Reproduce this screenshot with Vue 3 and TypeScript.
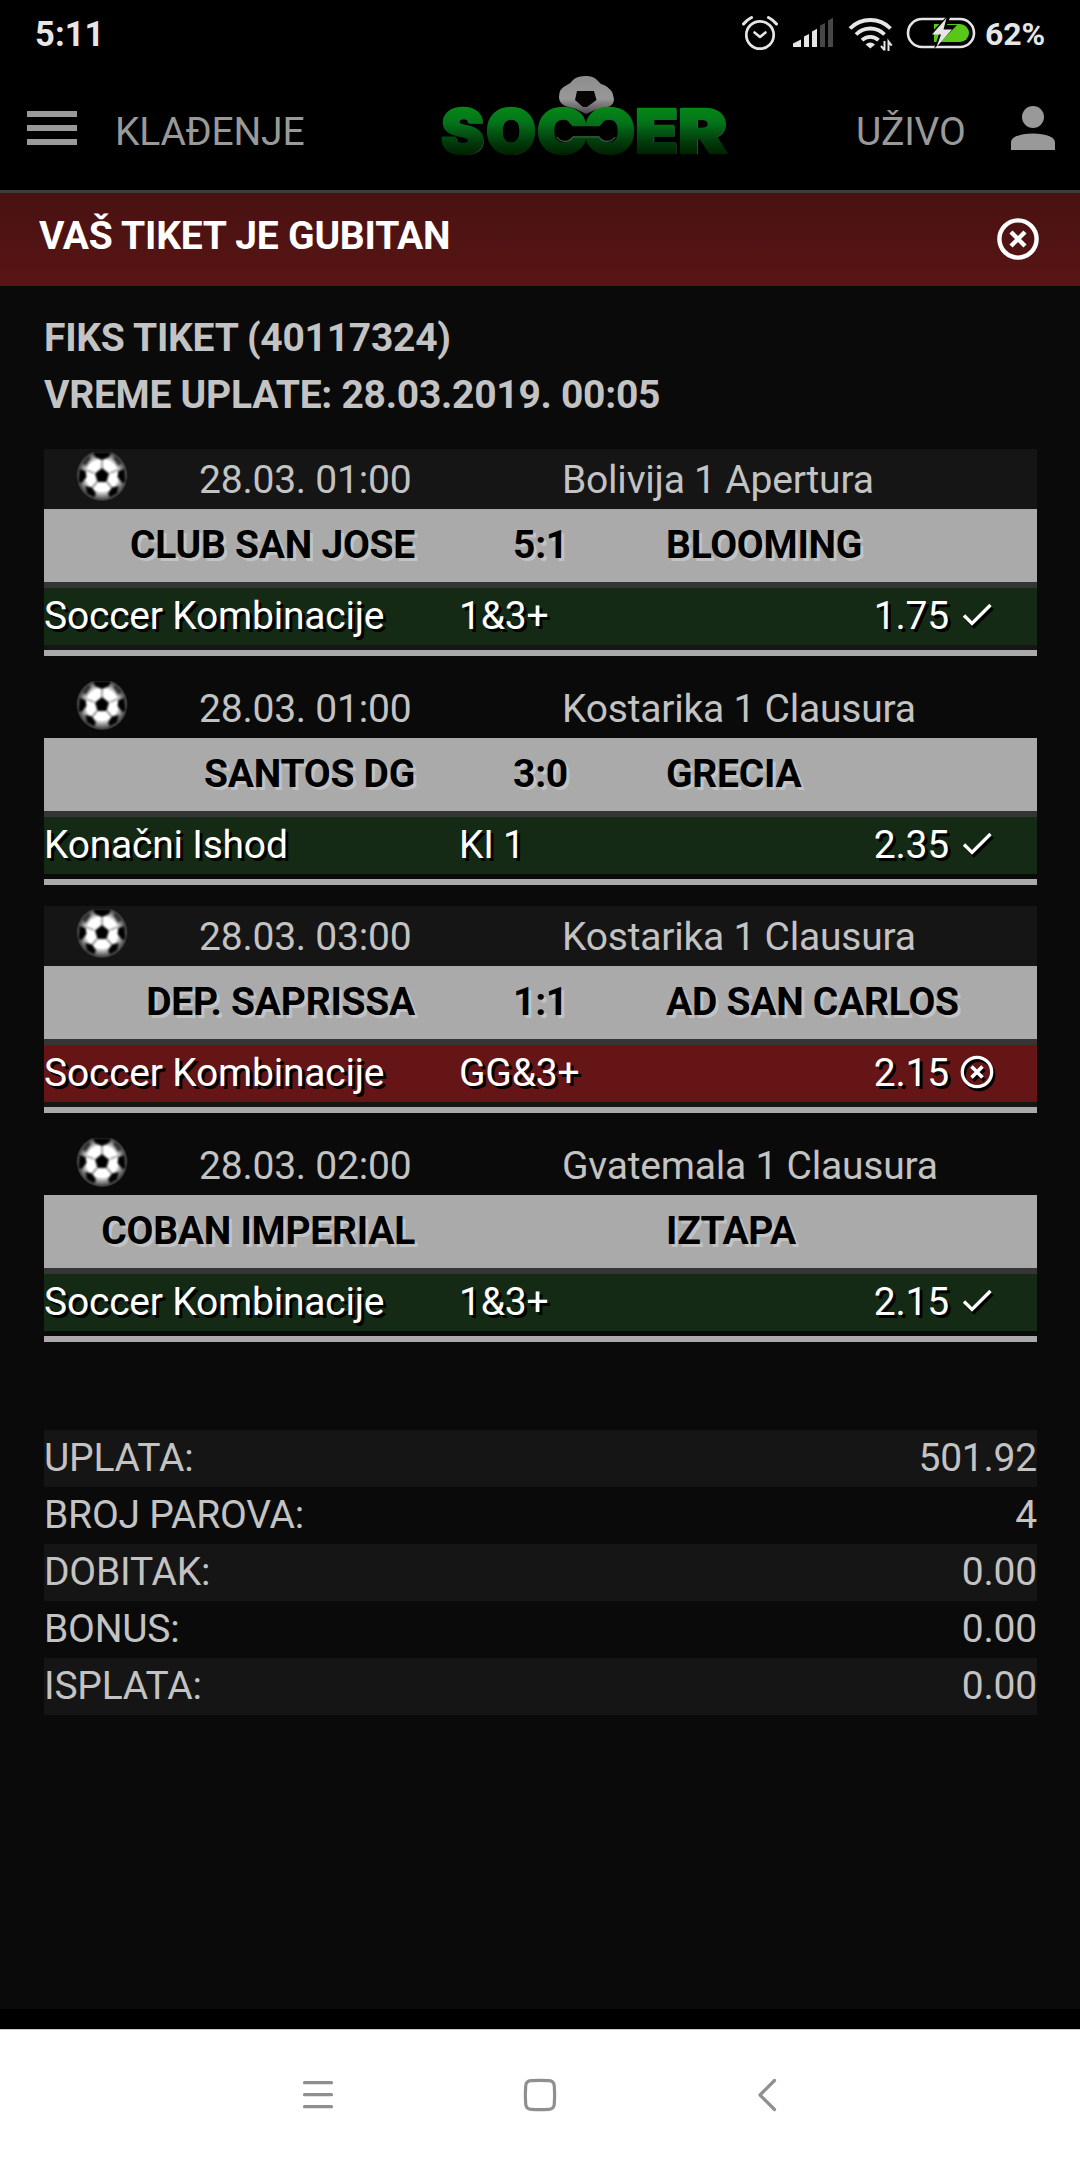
<script setup lang="ts">
interface Match {
  date: string
  league: string
  home: string
  away: string
  score: string
  bet: string
  pick: string
  odds: string
  won: boolean
}

const matches: Match[] = [
  { date: '28.03. 01:00', league: 'Bolivija 1 Apertura', home: 'CLUB SAN JOSE', away: 'BLOOMING', score: '5:1', bet: 'Soccer Kombinacije', pick: '1&3+', odds: '1.75', won: true },
  { date: '28.03. 01:00', league: 'Kostarika 1 Clausura', home: 'SANTOS DG', away: 'GRECIA', score: '3:0', bet: 'Konačni Ishod', pick: 'KI 1', odds: '2.35', won: true },
  { date: '28.03. 03:00', league: 'Kostarika 1 Clausura', home: 'DEP. SAPRISSA', away: 'AD SAN CARLOS', score: '1:1', bet: 'Soccer Kombinacije', pick: 'GG&3+', odds: '2.15', won: false },
  { date: '28.03. 02:00', league: 'Gvatemala 1 Clausura', home: 'COBAN IMPERIAL', away: 'IZTAPA', score: '', bet: 'Soccer Kombinacije', pick: '1&3+', odds: '2.15', won: true },
]

const totals: { label: string; value: string }[] = [
  { label: 'UPLATA:', value: '501.92' },
  { label: 'BROJ PAROVA:', value: '4' },
  { label: 'DOBITAK:', value: '0.00' },
  { label: 'BONUS:', value: '0.00' },
  { label: 'ISPLATA:', value: '0.00' },
]
</script>

<template>
  <div class="screen">
    <div class="status">
      <span class="clock">5:11</span>
      <svg class="status-icons" width="240" height="56" viewBox="740 0 240 56">
        <g fill="none" stroke="#e6e6e6" stroke-linecap="round" stroke-linejoin="round">
          <circle cx="760" cy="35" r="13.7" stroke-width="2.7" />
          <path d="M754.5 32.5l5.5 4.5 5.5-4.5" stroke-width="2.6" />
          <path d="M743.5 24q3-4 8-6.500M776.500 24q-3-4-8-6.500" stroke-width="3" />
        </g>
        <g fill="#e6e6e6">
          <path d="M793 47v-3.500l8-4V47z" />
          <path d="M804 47V36.500l5-2.500v13z" />
          <path d="M812 47V31.500l5-2.700V47z" />
        </g>
        <g fill="#474747">
          <path d="M820 47V25.500l5-2.500v24z" />
          <path d="M828 47V20.500l5-2.700V47z" />
        </g>
        <g fill="none" stroke="#e6e6e6" stroke-width="3.900">
          <path d="M850 28.500a28.500 28.500 0 0 1 40.500 0" />
          <path d="M856 34.500a20 20 0 0 1 28.500 0" />
          <path d="M862 40.200a12 12 0 0 1 16.500 0" />
        </g>
        <path d="M865.500 44.500q4.700-4 9.500 0l-4.700 4z" fill="#e6e6e6" />
        <path d="M884.500 41v9.500M881 46l3.500 4.200M888.500 51v-9.500l3.200 4.200" fill="none" stroke="#e6e6e6" stroke-width="2" />
        <rect x="908" y="19" width="66" height="28" rx="14" fill="none" stroke="#e6e6e6" stroke-width="2.600" />
        <path d="M934 24h26a9 9 0 0 1 0 18h-26z" fill="#58c71a" />
        <path d="M948 15l-18 19h9l-5 15 23-24h-10l4-10z" fill="#000" />
        <path d="M946.500 18l-14.500 16.500h9l-4.500 12.500 15.500-17.500h-8.500z" fill="#e6e6e6" />
      </svg>
      <span class="percent">62%</span>
    </div>

    <header class="topbar">
      <div class="menu-icon"><i></i><i></i><i></i></div>
      <span class="nav-left">KLAĐENJE</span>
      <svg class="logo" width="300" height="118" viewBox="435 70 300 118">
        <defs>
          <linearGradient id="green" gradientUnits="userSpaceOnUse" x1="0" y1="106" x2="0" y2="155">
            <stop offset="0" stop-color="#048a16" />
            <stop offset="0.350" stop-color="#04721a" />
            <stop offset="0.700" stop-color="#023f0c" />
            <stop offset="1" stop-color="#001f00" />
          </linearGradient>
          <linearGradient id="silver" x1="0" y1="0" x2="0" y2="1">
            <stop offset="0" stop-color="#8d8d8d" />
            <stop offset="0.600" stop-color="#989898" />
            <stop offset="1" stop-color="#4c454c" />
          </linearGradient>
        </defs>
        <path d="M559 97q0-9 8-12 4-2 6-5 4-4 13-4 8 0 12 5 2 3 6 4 9 4 10 14 0 6-6 8l-13 3-9 4-10-5-11-3q-6-3-6-9z" fill="url(#silver)" />
        <path d="M577 91h17l2.500 9-9.500 7h-4l-8-7z" fill="#050505" />
        <g class="logo-shade" transform="translate(1.500 1)">
          <text x="442" y="153" textLength="42" lengthAdjust="spacingAndGlyphs">S</text>
          <text x="486" y="153" textLength="49" lengthAdjust="spacingAndGlyphs">O</text>
          <text x="636" y="153" textLength="42" lengthAdjust="spacingAndGlyphs">E</text>
          <text x="679" y="153" textLength="48" lengthAdjust="spacingAndGlyphs">R</text>
        </g>
        <g class="logo-text">
          <text x="441" y="153" textLength="43" lengthAdjust="spacingAndGlyphs">S</text>
          <text x="486" y="153" textLength="50" lengthAdjust="spacingAndGlyphs">O</text>
          <text x="537" y="153" textLength="50" lengthAdjust="spacingAndGlyphs">C</text>
          <text transform="translate(1172 0) scale(-1 1)" x="537" y="153" textLength="50" lengthAdjust="spacingAndGlyphs">C</text>
          <text x="635" y="153" textLength="43" lengthAdjust="spacingAndGlyphs">E</text>
          <text x="678" y="153" textLength="49" lengthAdjust="spacingAndGlyphs">R</text>
        </g>
        <path d="M561 123a9 9 0 0 1 12 4h26a9 9 0 1 1 0 9h-26a9 9 0 1 1-12-13z" fill="#000" />
        <path d="M557 137a9.500 9.500 0 0 0 16 0h26a9.500 9.500 0 0 0 16 0" fill="none" stroke="#4a5a4c" stroke-width="1.200" />
      </svg>
      <span class="nav-right">UŽIVO</span>
      <svg class="person" width="44" height="44" viewBox="0 0 44 44" fill="#999">
        <circle cx="22" cy="11" r="11" />
        <path d="M0 44v-7.500C0 31 9 27.500 22 27.500S44 31 44 36.500V44z" />
      </svg>
    </header>

    <div class="banner">
      <span>VAŠ TIKET JE GUBITAN</span>
      <svg width="42" height="42" viewBox="0 0 42 42" fill="none" stroke="#fff" stroke-width="4.400">
        <circle cx="21" cy="21" r="18.600" />
        <path d="M14 14l14 14M28 14l-14 14" />
      </svg>
    </div>

    <main class="ticket">
      <div class="info">
        <div>FIKS TIKET (40117324)</div>
        <div>VREME UPLATE: 28.03.2019. 00:05</div>
      </div>

      <section v-for="(m, i) in matches" :key="i" class="match" :class="{ striped: i % 2 === 0 }">
        <div class="match-head">
          <svg class="ball" width="52" height="52" viewBox="0 0 52 52">
            <defs>
              <radialGradient id="leather">
                <stop offset="0.600" stop-color="#fff" />
                <stop offset="0.780" stop-color="#999" />
                <stop offset="1" stop-color="#2c2c2c" />
              </radialGradient>
              <clipPath id="round"><path d="M0 1h52v51H0z" /></clipPath>
              <filter id="soften"><feGaussianBlur stdDeviation="0.900" /></filter>
            </defs>
            <g clip-path="url(#round)">
              <circle cx="26" cy="24.500" r="25.500" fill="url(#leather)" />
              <g filter="url(#soften)" fill="#000">
                <path d="M26 17l7 5.500-2.500 8.500h-9L19 22.500z" />
                <path d="M17 1h18l-2 5-7 3-7-3z" />
                <path d="M3.500 18l6 2 1 6-5 6-3-1zM48.500 18l-6 2-1 6 5 6 3-1z" />
                <path d="M9 35l7 1.500 4 6-2 4-7-4zM43 35l-7 1.500-4 6 2 4 7-4z" />
                <path d="M6 12l6-7 3 2-5 8zM46 12l-6-7-3 2 5 8z" opacity=".6" />
                <path d="M26 9v9M18 22l-8-3M34 22l8-3M21 31l-5 6M31 31l5 6" stroke="#000" stroke-width="1.200" opacity=".6" />
              </g>
            </g>
          </svg>
          <span class="date">{{ m.date }}</span>
          <span class="league">{{ m.league }}</span>
        </div>
        <div class="teams">
          <span class="home">{{ m.home }}</span>
          <span class="score">{{ m.score }}</span>
          <span class="away">{{ m.away }}</span>
        </div>
        <div class="bet" :class="m.won ? 'won' : 'lost'">
          <span class="bet-name">{{ m.bet }}</span>
          <span class="pick">{{ m.pick }}</span>
          <span class="odds">{{ m.odds }}</span>
          <svg class="mark" width="34" height="34" viewBox="0 0 34 34" fill="none" stroke="#fff">
            <path v-if="m.won" d="M4 17.500l8 8L30.500 7" stroke-width="3.300" />
            <template v-else>
              <circle cx="17" cy="17" r="14.700" stroke-width="3.300" />
              <path d="M11.500 11.500l11 11M22.500 11.500l-11 11" stroke-width="3.600" />
            </template>
          </svg>
        </div>
      </section>

      <div class="totals">
        <div v-for="t in totals" :key="t.label" class="total">
          <span>{{ t.label }}</span><span>{{ t.value }}</span>
        </div>
      </div>
    </main>

    <div class="strip"></div>
    <nav class="sysnav">
      <svg width="480" height="36" viewBox="300 2077 480 36" fill="none" stroke="#8f8f8f" stroke-width="3.200" stroke-linecap="round" stroke-linejoin="round">
        <path d="M304.500 2082.700h27M304.500 2094.700h27M304.500 2106.700h27" />
        <path d="M531 2080.700Q540 2080 549 2080.700Q554 2081 554.300 2086Q555 2095 554.300 2104Q554 2109 549 2109.300Q540 2110 531 2109.300Q526 2109 525.700 2104Q525 2095 525.700 2086Q526 2081 531 2080.700Z" />
        <path d="M774.500 2080.500l-14.500 14.500 14.500 14.500" />
      </svg>
    </nav>
  </div>
</template>

<style>
body {
  margin: 0;
  background: #000;
}
</style>

<style scoped>
.screen {
  width: 1080px;
  height: 2160px;
  display: flex;
  flex-direction: column;
  overflow: hidden;
  background: #000;
  color: #c3c3c3;
  font-family: Roboto, "Liberation Sans", sans-serif;
  font-size: 39px;
  letter-spacing: -0.22px;
  line-height: 57px;
}
.screen svg {
  display: block;
  flex: none;
}
span {
  white-space: nowrap;
}
.status {
  height: 68px;
  display: flex;
  align-items: flex-start;
  color: #e6e6e6;
  font-weight: 700;
  letter-spacing: 0;
}
.clock {
  width: 705px;
  padding: 6px 0 0 35px;
  font-size: 34.5px;
  letter-spacing: 0.1px;
}
.percent {
  padding: 6px 0 0 5px;
  font-size: 32px;
  letter-spacing: -0.1px;
}
.topbar {
  height: 122px;
  display: flex;
  align-items: flex-start;
  border-bottom: 3px solid #3d3d3d;
  color: #999;
}
.menu-icon {
  width: 50px;
  display: flex;
  flex-direction: column;
  gap: 8px;
  margin: 43px 38px 0 27px;
}
.menu-icon i {
  height: 6px;
  background: #999;
}
.nav-left {
  width: 320px;
  padding-top: 36px;
}
.logo {
  margin-top: 2px;
}
.logo text {
  font-family: Inter, "Liberation Sans", sans-serif;
  font-weight: 900;
  font-size: 61px;
  letter-spacing: 0;
}
.logo-shade {
  fill: #555;
}
.logo-text {
  fill: url(#green);
  stroke: url(#green);
  stroke-width: 2.5;
  stroke-linejoin: round;
}
.nav-right {
  width: 155px;
  padding-top: 36px;
  margin-left: 121px;
}
.person {
  margin-top: 38px;
}
.banner {
  height: 93px;
  display: flex;
  justify-content: space-between;
  box-sizing: border-box;
  padding: 15px 41px 0 39px;
  background: linear-gradient(#481111, #591515);
  color: #fff;
  font-weight: 700;
}
.banner svg {
  margin-top: 10px;
}
.ticket {
  height: 1723px;
  box-sizing: border-box;
  padding: 24px 43px 0 44px;
  background: #0a0a0a;
}
.info {
  height: 139px;
  font-weight: 700;
  letter-spacing: -0.26px;
}
.match {
  height: 207px;
  margin-bottom: 21.667px;
  box-sizing: border-box;
  border-bottom: 6px solid #aaa;
}
.striped {
  background: #151515;
}
.match-head {
  height: 60px;
  display: flex;
  align-items: flex-start;
}
.ball {
  margin: 2px 71px 0 32px;
}
.date {
  width: 363px;
  padding-top: 3px;
}
.league {
  padding-top: 3px;
}
.teams {
  height: 79px;
  display: flex;
  box-sizing: border-box;
  padding-top: 8px;
  border-bottom: 6px solid #353535;
  background: #aaa;
  color: #000;
  font-weight: 700;
  letter-spacing: -0.26px;
  text-shadow: 3px 3px 0 #c3c3c3;
}
.home {
  width: 371px;
  text-align: right;
}
.score {
  width: 251px;
  text-align: center;
}
.bet {
  height: 57px;
  display: flex;
  color: #fff;
  text-shadow: 3px 3px 0 #000;
}
.won {
  background: #152a15;
}
.lost {
  background: #651515;
}
.bet-name {
  width: 415px;
}
.pick {
  width: 250px;
}
.odds {
  width: 240px;
  text-align: right;
}
.mark {
  margin: 10px 0 0 11px;
  filter: drop-shadow(2px 3px 0 #000);
}
.totals {
  margin-top: 88px;
}
.total {
  height: 57px;
  display: flex;
  justify-content: space-between;
}
.total:nth-child(odd) {
  background: #151515;
}
.strip {
  height: 20px;
  background: #000;
  border-bottom: 1px solid #ccc;
}
.sysnav {
  height: 130px;
  display: flex;
  justify-content: center;
  align-items: flex-start;
  background: #fff;
}
.sysnav svg {
  margin-top: 47px;
}
</style>
